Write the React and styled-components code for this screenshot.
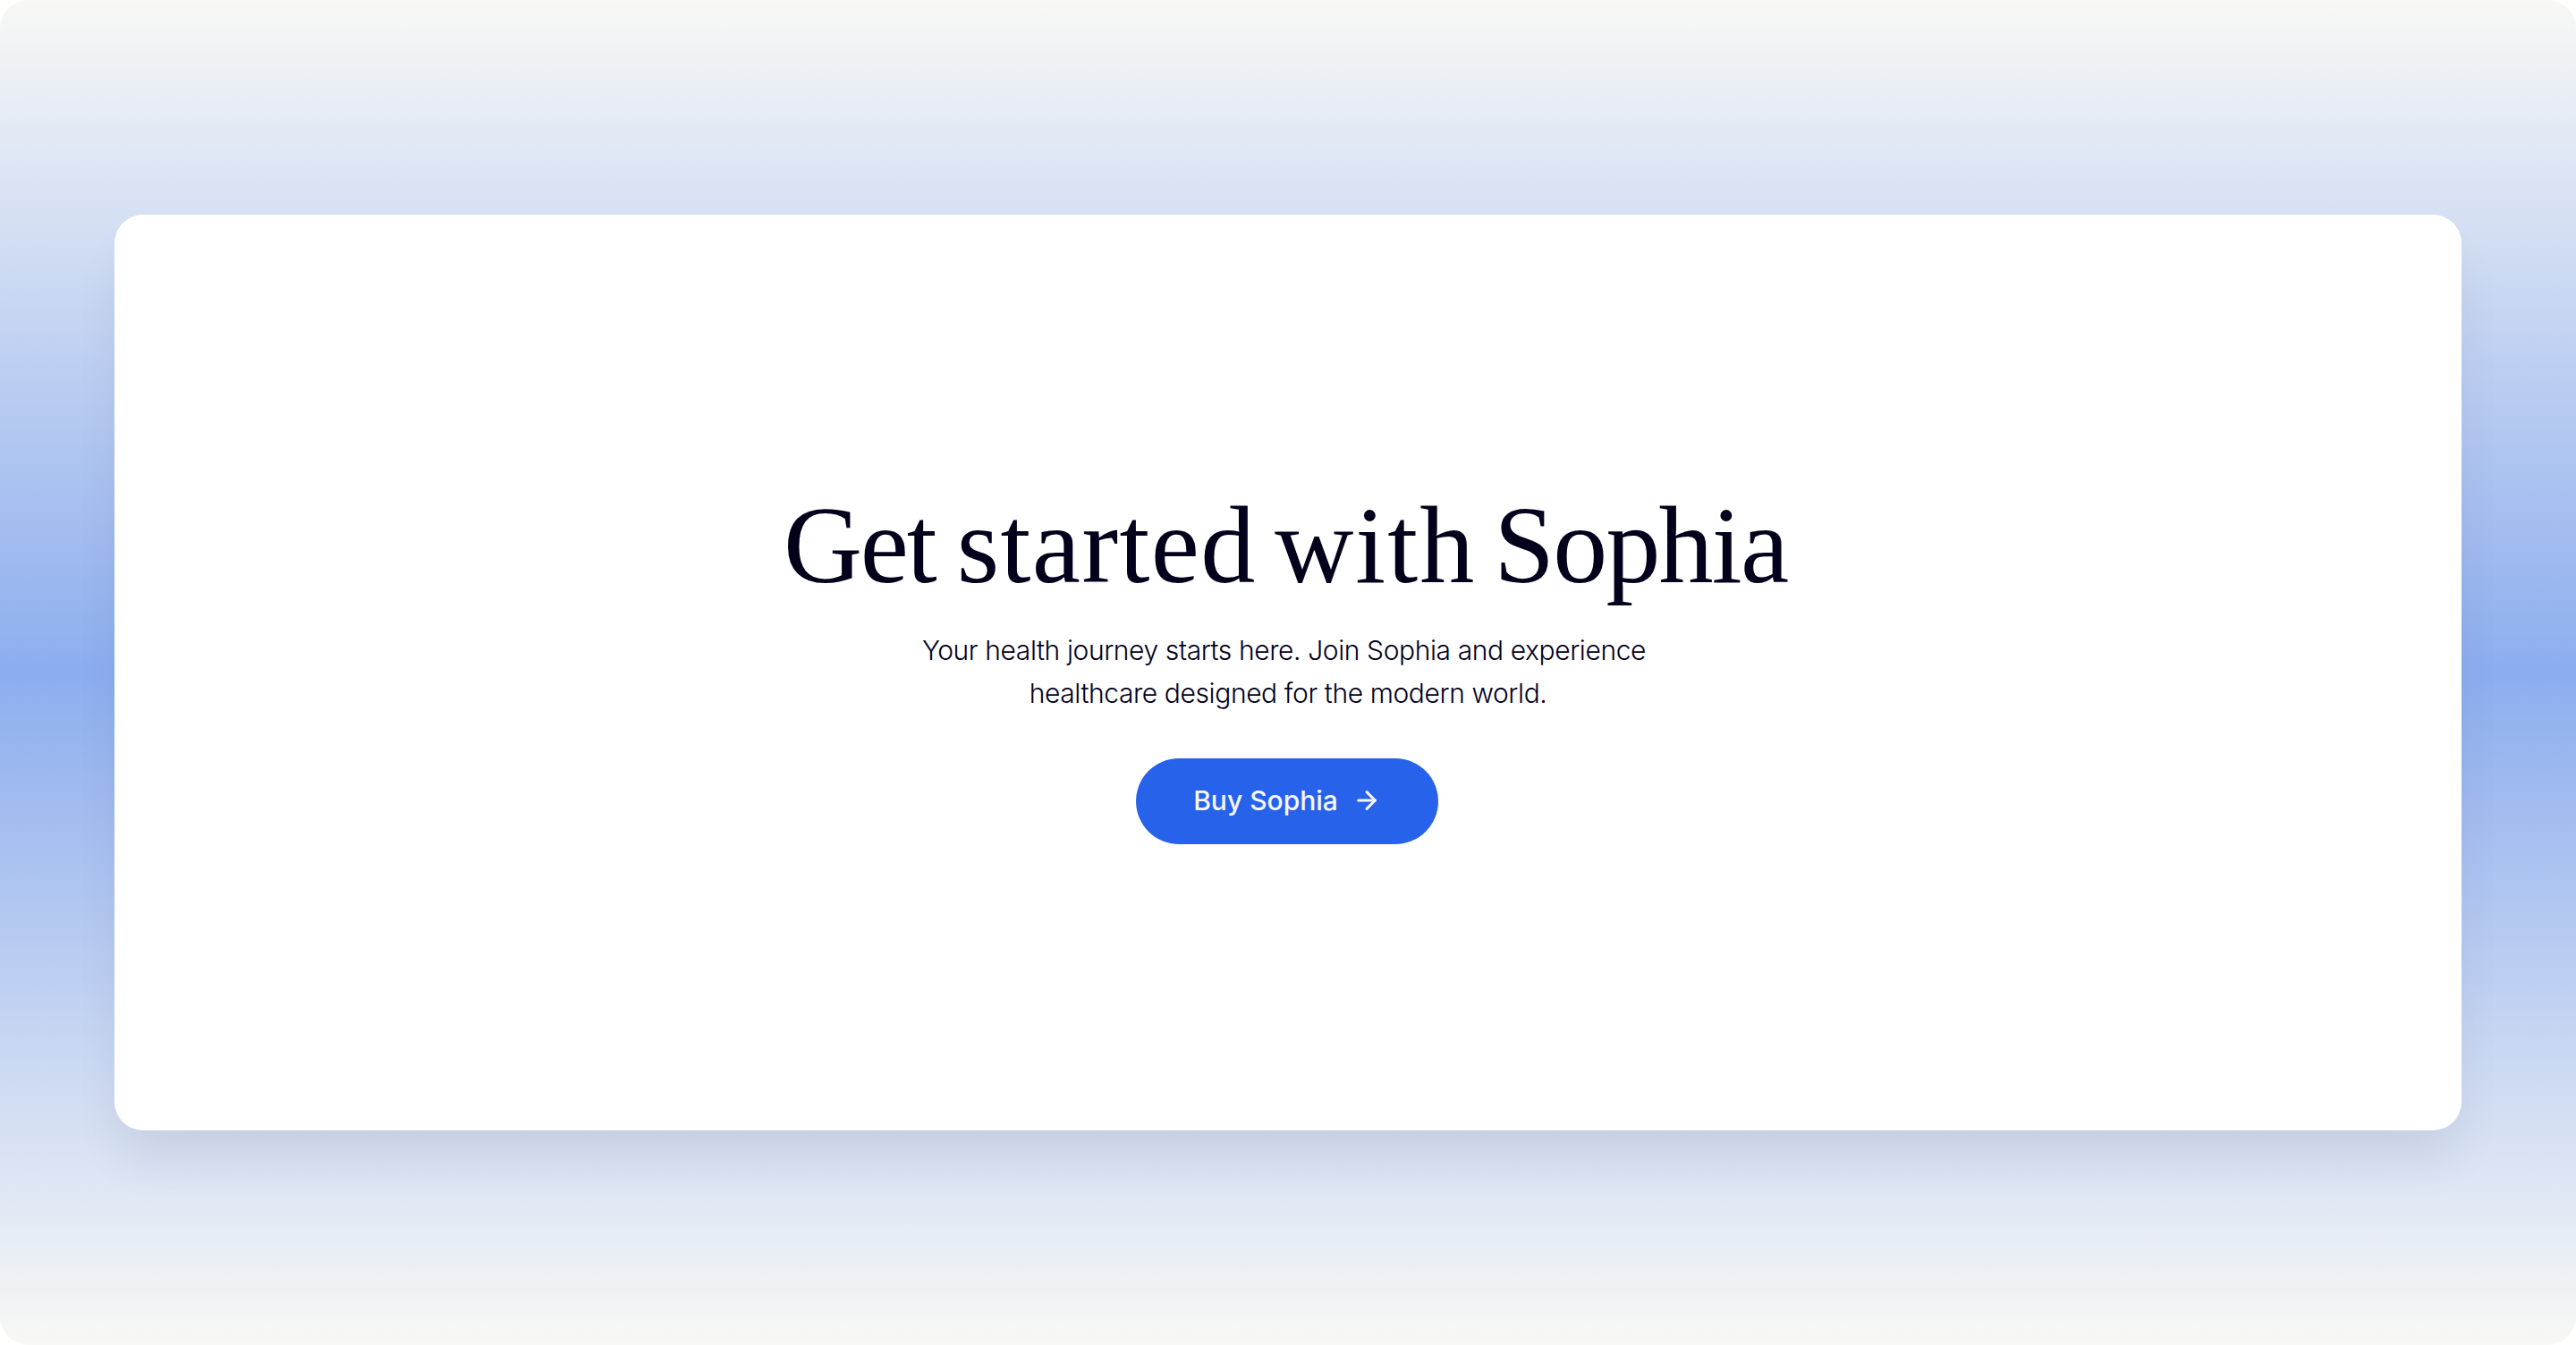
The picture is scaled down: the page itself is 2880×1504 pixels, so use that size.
import React from 'react'
import styled, { createGlobalStyle } from 'styled-components'
import { ArrowRight } from 'lucide-react'

const GlobalStyle = createGlobalStyle`
  * {
    box-sizing: border-box;
  }
  body {
    margin: 0;
    background: #ffffff;
    color: #03001c;
    font-family: Inter, 'Liberation Sans', sans-serif;
  }
`

const Section = styled('section')`
  display: flex;
  height: 1504px;
  padding: 240px 128px;
  border-radius: 32px;
  background: linear-gradient(to bottom, #f8f8f5, #8cadee 50%, #f8f8f5);
`

const Card = styled('div')`
  display: flex;
  flex: 1;
  flex-direction: column;
  align-items: center;
  padding-top: 302px;
  border-radius: 32px;
  background: #ffffff;
  box-shadow: 0 40px 56px -10px rgba(20, 10, 60, 0.085);
`

const Title = styled('h2')`
  display: flex;
  gap: 22px;
  margin: 0 4px 0 0;
  font-family: 'Liberation Serif', serif;
  font-size: 122px;
  font-weight: 400;
  line-height: 136px;
  white-space: nowrap;
`

const Word = styled('span')`
  margin-right: ${props => -props.$tracking}px;
  letter-spacing: ${props => props.$tracking}px;
`

const Description = styled('p')`
  margin: 25px 0 0;
  font-size: 30px;
  font-weight: 350;
  line-height: 48px;
  letter-spacing: -0.4px;
  text-align: center;
`

const Line = styled('span')`
  display: block;
  margin-right: ${props => props.$shift || '0'};
`

const Button = styled('button')`
  display: flex;
  align-items: center;
  gap: 16px;
  height: 96px;
  margin: 49px 2px 0 0;
  padding: 0 64px 2px;
  border: 0;
  border-radius: 48px;
  background: #2762ea;
  color: #f5f7fe;
  font-family: inherit;
  font-size: 30px;
  font-weight: 500;
  white-space: nowrap;
`

const App = () => (
  <>
    <GlobalStyle />
    <Section>
      <Card>
        <Title>
          <Word $tracking={-2.2}>Get</Word> <Word $tracking={1.4}>started</Word>{' '}
          <Word $tracking={2}>with</Word> <Word $tracking={-1.8}>Sophia</Word>
        </Title>
        <Description>
          <Line $shift="9px">
            Your health journey starts here. Join Sophia and experience
          </Line>
          <Line>healthcare designed for the modern world.</Line>
        </Description>
        <Button>
          Buy Sophia
          <ArrowRight size={32} strokeWidth={2.25} />
        </Button>
      </Card>
    </Section>
  </>
)

export default App
